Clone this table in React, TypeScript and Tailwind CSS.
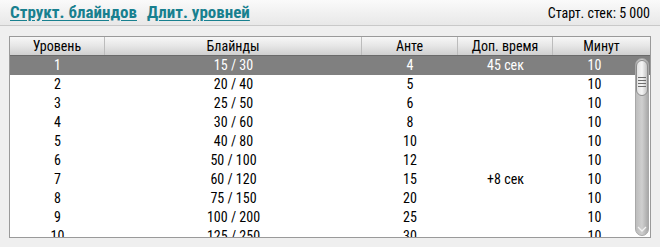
import React from "react";

const rows = [
  ["1", "15 / 30", "4", "45 сек", "10"],
  ["2", "20 / 40", "5", "", "10"],
  ["3", "25 / 50", "6", "", "10"],
  ["4", "30 / 60", "8", "", "10"],
  ["5", "40 / 80", "10", "", "10"],
  ["6", "50 / 100", "12", "", "10"],
  ["7", "60 / 120", "15", "+8 сек", "10"],
  ["8", "75 / 150", "20", "", "10"],
  ["9", "100 / 200", "25", "", "10"],
  ["10", "125 / 250", "30", "", "10"],
];

const cols = ["w-[95px]", "w-[257px]", "w-[96px]", "w-[95px]", "w-[83px]"];
const headCols = ["w-[95px]", "w-[257px]", "w-[96px]", "w-[95px]", "flex-1"];
const heads = ["Уровень", "Блайнды", "Анте", "Доп. время", "Минут"];

const font = { fontFamily: '"Liberation Sans Narrow", "Roboto Condensed", "Liberation Sans", sans-serif' };

function Scrollbar() {
  return (
    <div className="absolute right-[1px] top-[21px] bottom-[1px] w-[14px] rounded-[7px] border border-[#a8a8a8] bg-gradient-to-r from-[#bdbdbd] via-[#cfcfcf] to-[#a9a9a9]">
      <div className="mx-auto mt-[1px] h-[36px] w-[12px] rounded-[6px] border border-[#8c8c8c] bg-gradient-to-r from-[#e2e2e2] via-[#f5f5f5] to-[#c4c4c4] flex flex-col items-center pt-[16px] gap-[2px]">
        <div className="h-[1px] w-[8px] bg-[#6e6e6e]" />
        <div className="h-[1px] w-[8px] bg-[#6e6e6e]" />
        <div className="h-[1px] w-[8px] bg-[#6e6e6e]" />
        <div className="h-[1px] w-[8px] bg-[#6e6e6e]" />
      </div>
      <svg className="absolute bottom-[2px] left-[1px]" width="10" height="8" viewBox="0 0 10 8">
        <path d="M1 2 L5 6 L9 2" fill="none" stroke="#f2f2f2" strokeWidth="1.3" />
      </svg>
    </div>
  );
}

export default function App() {
  return (
    <div className="w-[660px] h-[247px] bg-[#efefef] text-black overflow-hidden" style={font}>
      <div className="h-[26px] flex items-center justify-between pl-[10px] pr-[10px] border-b border-[#c9c9c9] bg-gradient-to-b from-[#fafafa] to-[#e8e8e8]">
        <div className="flex gap-[10px] text-[17px] font-bold text-[#18808f] underline underline-offset-2">
          <span>Структ. блайндов</span>
          <span>Длит. уровней</span>
        </div>
        <span className="text-[14px] pt-[2px]">Старт. стек: 5 000</span>
      </div>
      <div className="relative mt-[10px] ml-[9px] w-[642px] h-[202px] border border-[#9a9a9a] bg-white overflow-hidden">
        <div className="flex h-[19px] border-b border-[#6a6a6a] bg-gradient-to-b from-[#f7f7f7] via-[#e6e6e6] to-[#cfcfcf] text-[14px]">
          {heads.map((h, i) => (
            <div key={h} className={`${headCols[i]} flex items-center justify-center ${i < 4 ? "border-r border-[#bcbcbc]" : ""}`}>
              {h}
            </div>
          ))}
        </div>
        {rows.map((r, ri) => (
          <div key={ri} className={`flex h-[19px] text-[14px] ${ri === 0 ? "bg-[#808080] text-white" : ""}`}>
            {r.map((c, ci) => (
              <div key={ci} className={`${cols[ci]} flex items-center justify-center`}>
                {c}
              </div>
            ))}
          </div>
        ))}
        <Scrollbar />
      </div>
    </div>
  );
}
